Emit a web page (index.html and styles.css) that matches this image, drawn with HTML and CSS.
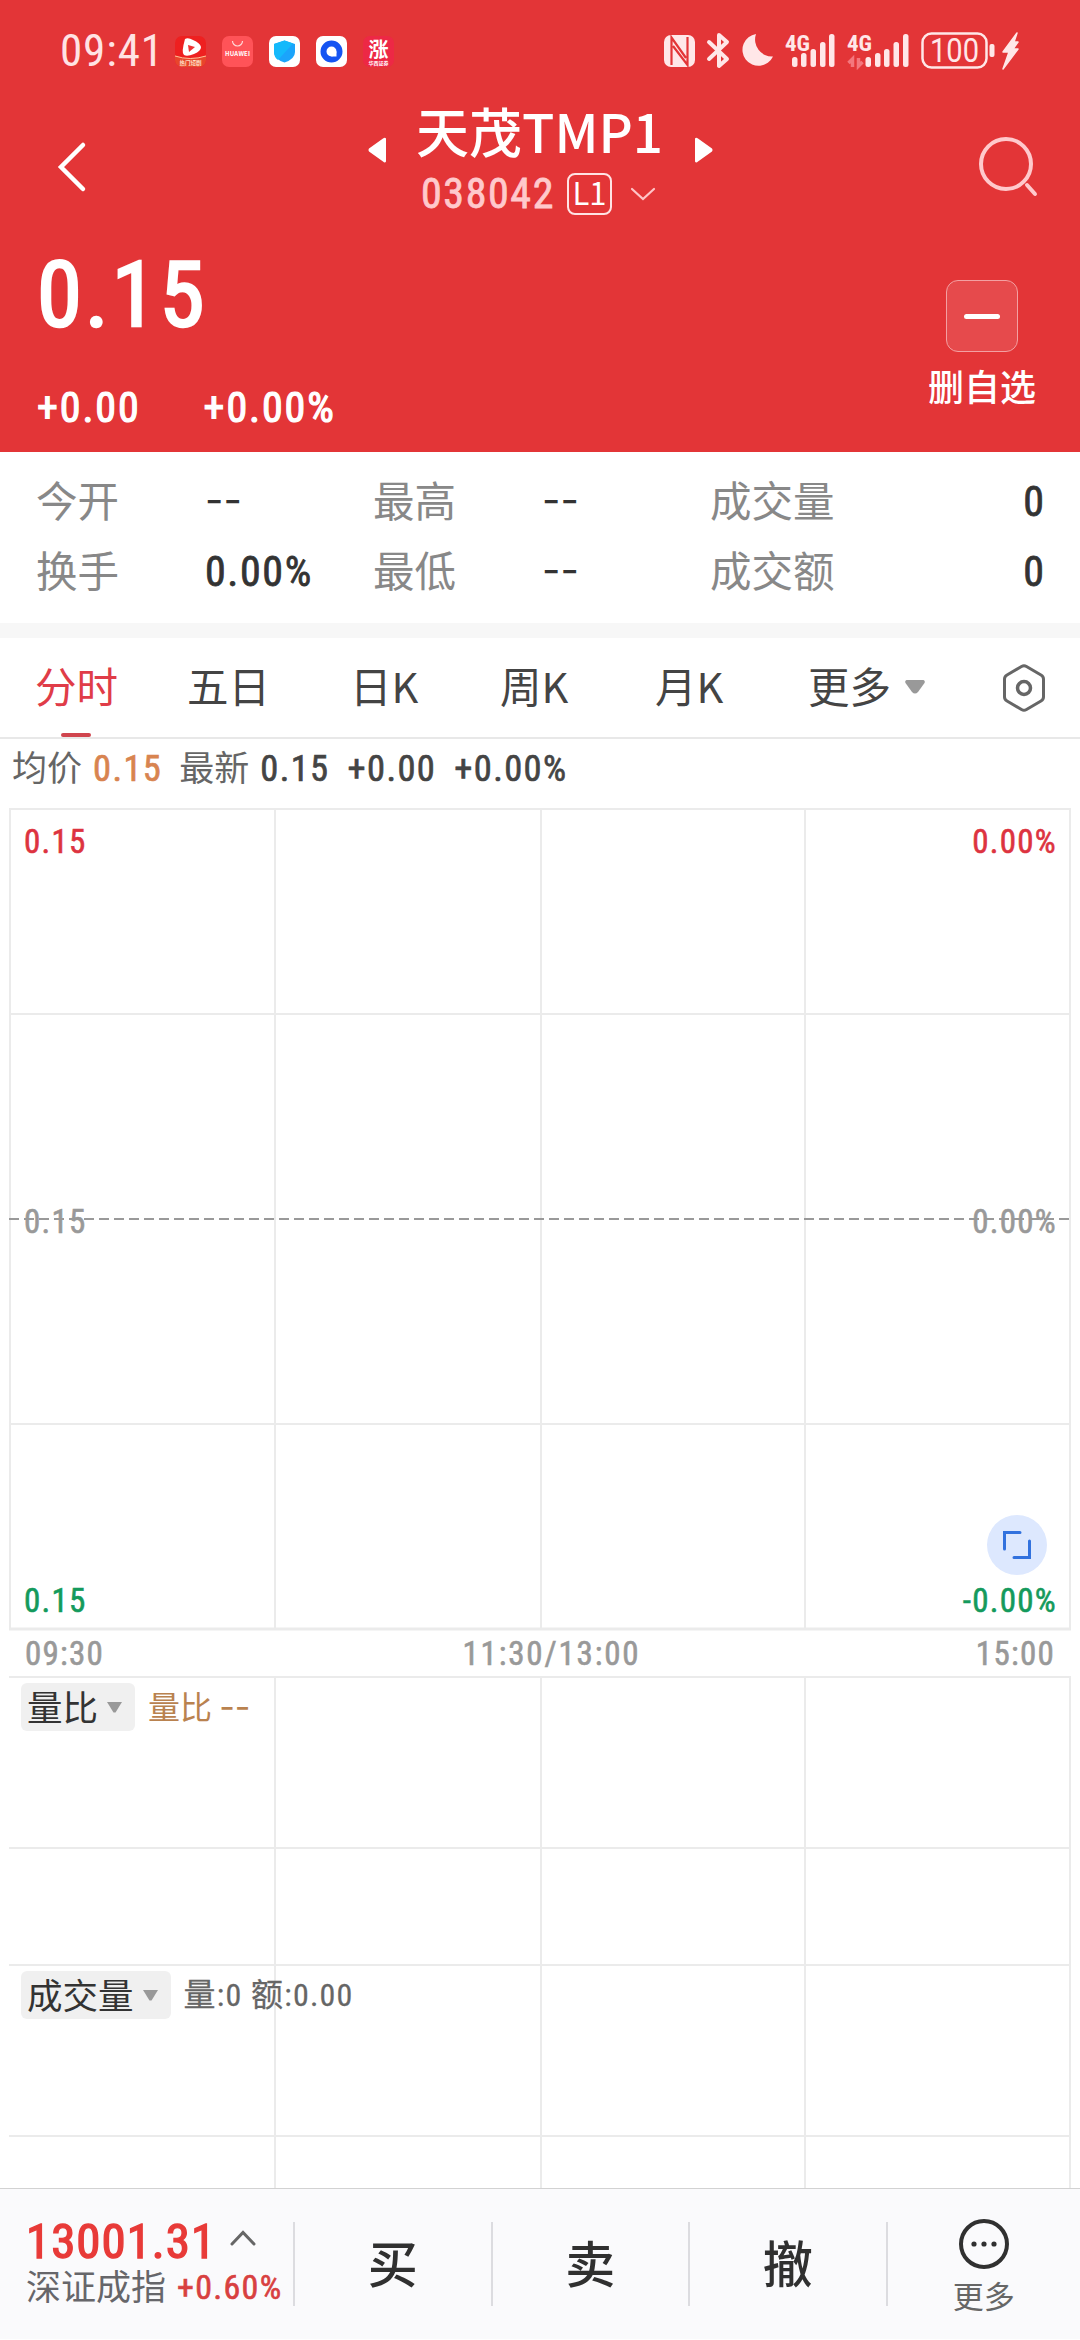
FILE: index.html
```
<!DOCTYPE html>
<html lang="zh-CN">
<head>
    <meta charset="utf-8">
    <title>天茂TMP1</title>
    <link rel="stylesheet" href="styles.css">
</head>
<body>
    <div class="header">
        <!-- status bar -->
        <div class="status">
            <span class="time">09:41</span>
            <div class="apps">
                <svg width="31" height="31" viewBox="0 0 31 31">
                    <rect width="31" height="31" rx="7" fill="#ee2020"/>
                    <path d="M0 20q15 6 31 0v4a7 7 0 0 1-7 7H7a7 7 0 0 1-7-7z" fill="#e8452c"/>
                    <path d="M0 20q15 5 31 0" fill="none" stroke="#ffc69a" stroke-width="1"/>
                    <path d="M10 3q3-2 8 1 7 3 8 7 0 4-7 7-7 3-10 1-3-2 1-16z" fill="#fff"/>
                    <path d="M13 9l7 2-6 5z" fill="#e33"/>
                    <text x="15.500" y="29" font-size="5.500" font-weight="700" fill="#ffe3c8" text-anchor="middle">热门短剧</text>
                </svg>
                <svg width="31" height="31" viewBox="0 0 31 31">
                    <rect width="31" height="31" rx="7" fill="#ff5358"/>
                    <path d="M10.500 5a5 5 0 0 0 10 0" fill="none" stroke="#ffd9d9" stroke-width="1.200"/>
                    <text x="15.500" y="20" font-size="6" font-weight="700" fill="#fff" text-anchor="middle" textLength="25">HUAWEI</text>
                </svg>
                <svg width="31" height="31" viewBox="0 0 31 31">
                    <rect width="31" height="31" rx="7" fill="#fff"/>
                    <path d="M15.500 4.500l10.500 3.500v8q0 7-10.500 10.500Q5 23 5 16V8z" fill="#1ba4fb"/>
                    <path d="M15.500 4.500L5 8v8q0 5 4 8L24 7.500z" fill="#14b9fb"/>
                </svg>
                <svg width="31" height="31" viewBox="0 0 31 31">
                    <rect width="31" height="31" rx="7" fill="#fff"/>
                    <circle cx="15.500" cy="15.500" r="8" fill="none" stroke="#1554f2" stroke-width="6"/>
                    <path d="M15.500 15.500h5v5h-5z" fill="#fff"/>
                </svg>
                <svg class="zhang" width="31" height="31" viewBox="0 0 31 31">
                    <rect width="31" height="31" rx="7" fill="#ed2845"/>
                    <text x="15.500" y="21" font-size="20" font-weight="700" fill="#fff" text-anchor="middle">涨</text>
                    <text x="15.500" y="29" font-size="5" font-weight="700" fill="#fff" text-anchor="middle">华西证券</text>
                </svg>
            </div>
            <svg class="signals" width="360" height="40" viewBox="0 0 360 40">
                <g fill="#ffe7e8">
                    <!-- nfc -->
                    <rect x="4" y="5" width="31" height="32" rx="7"/>
                    <path d="M11.500 35V7.500L26 28M27.500 7v28L13 16" fill="none" stroke="#e33537" stroke-width="2.200"/>
                    <!-- moon -->
                    <path d="M96 4a17 17 0 0 0 17 22.500A16 16 0 1 1 96 4z"/>
                    <!-- signal bars -->
                    <rect x="132" y="27" width="5.500" height="10" rx="2.500"/>
                    <rect x="141" y="23" width="5.500" height="14" rx="2.500"/>
                    <rect x="150.500" y="19" width="5.500" height="18" rx="2.500"/>
                    <rect x="160" y="12" width="5.500" height="25" rx="2.500"/>
                    <rect x="169" y="4" width="5.500" height="33" rx="2.500"/>
                    <rect x="205.500" y="27" width="5.500" height="10" rx="2.500"/>
                    <rect x="215" y="23" width="5.500" height="14" rx="2.500"/>
                    <rect x="224" y="19" width="5.500" height="18" rx="2.500"/>
                    <rect x="233.500" y="12" width="5.500" height="25" rx="2.500"/>
                    <rect x="243" y="4" width="5.500" height="33" rx="2.500"/>
                    <text class="net" x="125" y="20.500" textLength="25" lengthAdjust="spacingAndGlyphs">4G</text>
                    <text class="net" x="187" y="20.500" textLength="25" lengthAdjust="spacingAndGlyphs">4G</text>
                    <!-- battery -->
                    <rect x="262.500" y="3.500" width="64" height="34" rx="9" fill="none" stroke="#ffe7e8" stroke-width="2.500"/>
                    <rect x="329.500" y="14" width="5" height="13" rx="2"/>
                    <text class="level" x="294.500" y="32" text-anchor="middle" textLength="49" lengthAdjust="spacingAndGlyphs">100</text>
                    <path d="M357 3l-14 19h6l-6 17 15-20h-5l5-7h-4z" stroke="#ffe7e8" stroke-width="1.500" stroke-linejoin="round"/>
                </g>
                <path d="M49 12l18 17-8 7V5l8 7-18 17" fill="none" stroke="#ffe7e8" stroke-width="4" stroke-linejoin="round" stroke-linecap="round"/>
                <path d="M192.500 37V29l-4 4M198.500 28v8l4-4" fill="none" stroke="#f4777d" stroke-width="3.500"/>
            </svg>
        </div>

        <!-- title -->
        <div class="nav">
            <svg class="back" width="30" height="52" viewBox="0 0 30 52"><path d="M26 4L4 26l22 22" fill="none" stroke="#fff" stroke-width="4.500" stroke-linecap="round"/></svg>
            <svg class="arrow" width="18" height="26" viewBox="0 0 18 26"><path d="M18 1.500v23q-1 2-3 0L1 14.500q-1-1.500 0-3L15 1.500q2-1.500 3 0z" fill="#fff"/></svg>
            <div class="names">
                <div class="title">天茂TMP1</div>
                <div class="code">
                    <span class="num">038042</span>
                    <span class="tag">L1</span>
                    <svg width="26" height="14" viewBox="0 0 26 14"><path d="M2 2l11 10L24 2" fill="none" stroke="#ffc4c7" stroke-width="2.200" stroke-linecap="round"/></svg>
                </div>
            </div>
            <svg class="arrow" width="18" height="26" viewBox="0 0 18 26"><path d="M0 1.500v23q1 2 3 0l14-10q1-1.500 0-3L3 1.500Q1 0 0 1.500z" fill="#fff"/></svg>
            <svg class="search" width="60" height="60" viewBox="0 0 60 60"><g fill="none" stroke="#ffc9cc" stroke-width="4" stroke-linecap="round"><circle cx="27" cy="27" r="25"/><path d="M48 48l8 9"/></g></svg>
        </div>

        <!-- price -->
        <div class="quote">
            <div>
                <div class="price num">0.15</div>
                <div class="changes num"><span>+0.00</span><span>+0.00%</span></div>
            </div>
            <div class="fav">
                <div class="minus"></div>
                <span>删自选</span>
            </div>
        </div>
    </div>

    <div class="stats">
        <span>今开</span><b class="dash">--</b><span>最高</span><b class="dash">--</b><span>成交量</span><b class="num right">0</b>
        <span>换手</span><b class="num">0.00%</b><span>最低</span><b class="dash">--</b><span>成交额</span><b class="num right">0</b>
    </div>

    <div class="tabs">
        <div class="tab active">分时</div>
        <div class="tab">五日</div>
        <div class="tab">日K</div>
        <div class="tab">周K</div>
        <div class="tab">月K</div>
        <div class="tab">更多<svg width="20" height="14" viewBox="0 0 20 14"><path d="M1.500 0h17q2 1 1 3l-6.500 9q-3 3-6 0L.5 3q-1-2 1-3z" fill="#999"/></svg></div>
        <svg width="44" height="50" viewBox="0 0 44 50"><g fill="none" stroke="#666" stroke-width="3"><path d="M19.500 3.500q2.500-1.500 5 0L39 12q2.500 1.500 2.500 4v18q0 2.500-2.500 4l-14.500 8.500q-2.500 1.500-5 0L5 38q-2.500-1.500-2.500-4V16q0-2.500 2.500-4z"/><circle cx="22" cy="25" r="6.500" stroke-width="3.500"/></g></svg>
    </div>

    <div class="info">
        <span class="name">均价</span><span class="num avg">0.15</span>
        <span class="name">最新</span><span class="num last">0.15</span>
        <span class="num diff">+0.00</span><span class="num">+0.00%</span>
    </div>

    <!-- minute chart -->
    <div class="chart">
        <svg class="grid" width="1062" height="823" viewBox="0 0 1062 823">
            <g fill="none" stroke="#ebebeb" stroke-width="2">
                <path d="M1 0v822M266 0v822M532 0v822M796 0v822M1061 0v822M0 1h1062M0 206h1062M0 616h1062"/>
                <path d="M0 821h1062" stroke-width="3"/>
            </g>
            <path d="M0 411h1062" stroke="#999" stroke-width="2" stroke-dasharray="10 5"/>
        </svg>
        <div class="row red num"><span>0.15</span><span>0.00%</span></div>
        <div class="row grey num"><span>0.15</span><span>0.00%</span></div>
        <div class="row green num"><span>0.15</span><span>-0.00%</span></div>
        <div class="expand">
            <svg width="30" height="30" viewBox="0 0 30 30"><path d="M2.500 19V2.500H18M27.500 11v16.500H12" fill="none" stroke="#3272de" stroke-width="3" stroke-linecap="round"/></svg>
        </div>
    </div>
    <div class="times num"><span>09:30</span><span class="noon">11:30/13:00</span><span>15:00</span></div>

    <!-- indicators -->
    <div class="panel ratio">
        <svg class="grid" width="1062" height="288" viewBox="0 0 1062 288"><path d="M266 0v288M532 0v288M796 0v288M1061 0v288M0 1h1062M0 172h1062" fill="none" stroke="#ebebeb" stroke-width="2"/></svg>
        <span class="chip">量比<svg width="15" height="11" viewBox="0 0 15 11"><path d="M0 0h15L8.500 10.500h-2z" fill="#999"/></svg></span>
        <span class="value brown">量比 <span class="dash">--</span></span>
    </div>
    <div class="panel volume">
        <svg class="grid" width="1062" height="225" viewBox="0 0 1062 225"><path d="M266 0v225M532 0v225M796 0v225M1061 0v225M0 1h1062M0 172h1062" fill="none" stroke="#ebebeb" stroke-width="2"/></svg>
        <span class="chip">成交量<svg width="15" height="11" viewBox="0 0 15 11"><path d="M0 0h15L8.500 10.500h-2z" fill="#999"/></svg></span>
        <span class="value num">量:0 额:0.00</span>
    </div>

    <!-- bottom bar -->
    <div class="bottom">
        <div class="index">
            <div class="points num">13001.31<svg width="26" height="16" viewBox="0 0 26 16"><path d="M2 14L13 2.500 24 14" fill="none" stroke="#666" stroke-width="3" stroke-linecap="round"/></svg></div>
            <div class="market">深证成指<span class="num">+0.60%</span></div>
        </div>
        <div class="action">买</div>
        <div class="action">卖</div>
        <div class="action">撤</div>
        <div class="more">
            <svg width="50" height="50" viewBox="0 0 50 50"><circle cx="25" cy="25" r="23" fill="none" stroke="#303030" stroke-width="4"/><g fill="#303030"><circle cx="15" cy="25" r="2.600"/><circle cx="25" cy="25" r="2.600"/><circle cx="35" cy="25" r="2.600"/></g></svg>
            <span>更多</span>
        </div>
    </div>
</body>
</html>
```
FILE: styles.css
```
* {
    box-sizing: border-box;
}
body {
    margin: 0;
    width: 1080px;
    height: 2340px;
    overflow: hidden;
    font-family: "Noto Sans CJK SC", sans-serif;
    background-color: #fff;
    color: #333;
}
svg {
    display: block;
    flex: none;
}
/* thin stroke gives the figures a medium weight */
.num {
    font-family: "Roboto Condensed", "Noto Sans CJK SC", sans-serif;
    font-weight: 400;
    letter-spacing: 0.038em;
    white-space: nowrap;
    -webkit-text-stroke: 0.018em currentColor;
}
.dash {
    font-family: Inter, sans-serif;
    letter-spacing: 0;
}

/* header */
.header {
    height: 452px;
    background-color: #e33537;
    color: #fff;
}
.status {
    display: flex;
    align-items: center;
    height: 90px;
    padding: 12px 60px 0 60px;
}
.time {
    width: 115px;
    font: 45px/50px "Roboto Condensed", sans-serif;
    letter-spacing: 0.02em;
    color: #ffe3e4;
}
.apps {
    display: flex;
    gap: 16px;
}
.zhang {
    overflow: visible;
}
.signals {
    margin: -2px 0 0 auto;
}
.net {
    font: 700 22px "Roboto Condensed", sans-serif;
}
.level {
    font: 34px Roboto, sans-serif;
}
.nav {
    display: flex;
    height: 142px;
    padding: 0 41px 0 57px;
}
.back {
    margin: 51px 281px 0 0;
}
.arrow {
    margin-top: 47px;
}
.arrow:nth-of-type(3) {
    margin-left: 1px;
}
.names {
    width: 308px;
    text-align: center;
}
.title {
    height: 77px;
    margin: 2px 0 0 -1px;
    font-size: 53px;
    line-height: 77px;
    font-weight: 500;
    white-space: nowrap;
}
.code {
    display: flex;
    align-items: center;
    justify-content: center;
    height: 50px;
    margin-left: -3px;
    font-size: 42px;
    line-height: 50px;
    color: #ffc9cc;
}
.tag {
    width: 45px;
    height: 42px;
    margin: 0 18px 0 12px;
    border: 2px solid #ffe3e4;
    border-radius: 8px;
    font-size: 31px;
    line-height: 34px;
    color: #fff;
}
.search {
    margin: 47px 0 0 auto;
}
.quote {
    display: flex;
    justify-content: space-between;
    padding: 17px 43px 0 37px;
}
.price {
    font-size: 91px;
    line-height: 93px;
    letter-spacing: 0.032em;
    -webkit-text-stroke-width: 0.028em;
}
.changes {
    display: flex;
    gap: 63px;
    margin-top: 45px;
    font-size: 42px;
    line-height: 42px;
    letter-spacing: 0.045em;
    -webkit-text-stroke-width: 0.028em;
}
.fav {
    display: flex;
    flex-direction: column;
    align-items: center;
    width: 110px;
    padding-top: 31px;
    font-size: 36px;
    line-height: 40px;
    font-weight: 500;
    white-space: nowrap;
}
.minus {
    width: 72px;
    height: 72px;
    margin-bottom: 13px;
    padding: 33px 17px;
    border: 1px solid #f3a0a2;
    border-radius: 12px;
    background-color: #e64a4c;
}
.minus::before {
    content: "";
    display: block;
    height: 5px;
    border-radius: 3px;
    background-color: #fff;
}

/* stats */
.stats {
    display: grid;
    grid-template-columns: 169px 168px 169px 168px 168px 1fr;
    grid-auto-rows: 70px;
    height: 171px;
    padding: 12px 36px 0;
    font-size: 41.500px;
    line-height: 70px;
    color: #888;
}
.stats b {
    padding-top: 3px;
    font-size: 42px;
    color: #333;
}
.stats .dash {
    padding-top: 1px;
    font-size: 40px;
    font-weight: 400;
}
.stats .right {
    text-align: right;
    letter-spacing: 0;
}

/* tabs */
.tabs {
    display: grid;
    grid-template-columns: 152px 163px 150px 155px 153px 1fr 44px;
    height: 116px;
    padding: 0 34px 0 35px;
    border-top: 15px solid #f7f7f7;
    border-bottom: 2px solid #e8e8e8;
    font-size: 41.500px;
    line-height: 90px;
    color: #444;
}
.tab {
    display: flex;
    align-items: center;
    padding-bottom: 5px;
}
.tab svg {
    margin: 4px 0 0 14px;
}
.tabs > svg {
    margin-top: 25px;
}
.active {
    position: relative;
    color: #e03c48;
}
.active::after {
    content: "";
    position: absolute;
    left: 26px;
    bottom: 0;
    width: 30px;
    height: 4px;
    border-radius: 2px;
    background-color: #d0454e;
}
.info {
    display: flex;
    height: 69px;
    padding-left: 12px;
    font-size: 35px;
    line-height: 53px;
    color: #444;
}
.name {
    color: #666;
}
.info .num {
    padding-top: 3px;
    font-size: 36.500px;
}
.info .avg {
    margin: 0 17px 0 11px;
    color: #d88450;
}
.info .last {
    margin: 0 18px 0 11px;
}
.info .diff {
    margin-right: 18px;
}

/* charts */
.chart {
    position: relative;
    display: flex;
    flex-direction: column;
    justify-content: space-between;
    height: 823px;
    margin: 0 9px;
    padding: 14px 14px 10px 15px;
}
.grid {
    position: absolute;
    left: 0;
    top: 0;
}
.row {
    position: relative;
    display: flex;
    justify-content: space-between;
    font-size: 33px;
    line-height: 40px;
}
.red {
    color: #dd3340;
}
.grey {
    color: #999;
}
.green {
    color: #149a5c;
}
.expand {
    position: absolute;
    right: 24px;
    top: 707px;
    display: flex;
    align-items: center;
    justify-content: center;
    width: 60px;
    height: 60px;
    border-radius: 50%;
    background-color: #dde8fe;
}
.times {
    display: flex;
    justify-content: space-between;
    height: 45px;
    padding: 0 25px;
    font-size: 33px;
    line-height: 46px;
    color: #999;
}
.noon {
    margin-left: 23px;
    letter-spacing: 0.055em;
}
.panel {
    position: relative;
    display: flex;
    align-items: flex-start;
    gap: 13px;
    margin: 0 9px;
    padding: 7px 12px;
}
.ratio {
    height: 288px;
}
.volume {
    height: 224px;
    overflow: hidden;
}
.chip {
    position: relative;
    display: flex;
    align-items: center;
    gap: 9px;
    height: 48px;
    padding: 0 13px 2px 6px;
    border-radius: 6px;
    background-color: #f0f0f0;
    font-size: 35.500px;
    line-height: 46px;
}
.chip svg {
    margin-top: 3px;
}
.value {
    position: relative;
    font-size: 32px;
    line-height: 49px;
    color: #666;
}
.volume .value {
    -webkit-text-stroke-width: 0.008em;
}
.brown {
    line-height: 45px;
    color: #b9824f;
}
.brown .dash {
    font-size: 34px;
}

/* bottom bar */
.bottom {
    display: flex;
    align-items: center;
    height: 151px;
    border-top: 1px solid #d2d2d2;
    background-color: #fafafc;
    color: #303030;
}
.index {
    width: 295px;
    height: 84px;
    border-right: 2px solid #dcdce0;
    padding-left: 26px;
}
.points {
    display: flex;
    align-items: center;
    gap: 14px;
    margin-top: -3px;
    font-size: 49px;
    line-height: 46px;
    letter-spacing: 0.02em;
    color: #e83a38;
    -webkit-text-stroke-width: 0.028em;
}
.points svg {
    margin-top: -9px;
}
.market {
    display: flex;
    gap: 11px;
    font-size: 35px;
    line-height: 39px;
    color: #66666a;
    white-space: nowrap;
}
.market .num {
    padding-top: 3px;
    font-size: 34px;
    color: #d84040;
}
.action {
    width: 197.500px;
    height: 84px;
    border-right: 2px solid #dcdce0;
    font-size: 50px;
    font-weight: 500;
    line-height: 79px;
    text-align: center;
}
.more {
    display: flex;
    flex-direction: column;
    align-items: center;
    gap: 6px;
    flex: 1;
    padding-top: 5px;
    font-size: 31px;
    line-height: 40px;
    color: #666;
}
```
